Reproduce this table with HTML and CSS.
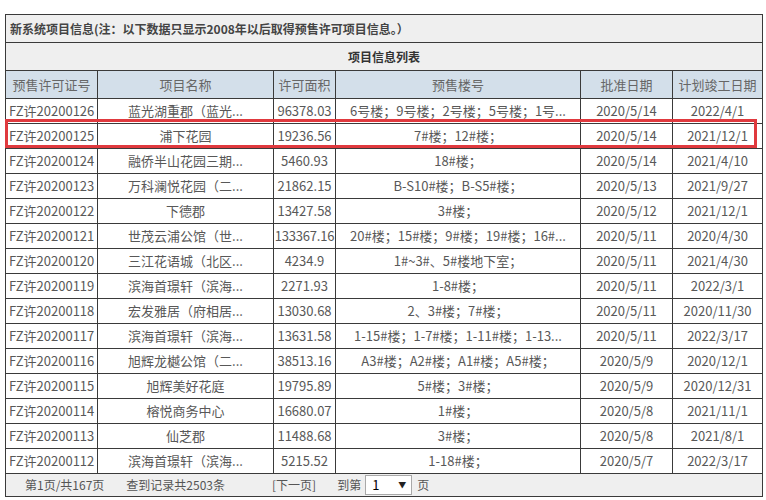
FILE: index.html
```html
<!DOCTYPE html>
<html lang="zh-CN">
<head>
<meta charset="utf-8">
<title>项目信息列表</title>
<link rel="stylesheet" href="styles.css">
</head>
<body>
<div class="page">
  <table class="grid">
    <colgroup>
      <col class="c1"><col class="c2"><col class="c3"><col class="c4"><col class="c5"><col class="c6">
    </colgroup>
    <tr class="title"><td colspan="6">新系统项目信息(注：以下数据只显示2008年以后取得预售许可项目信息。）</td></tr>
    <tr class="caption"><td colspan="6">项目信息列表</td></tr>
    <tr class="head"><td>预售许可证号</td><td>项目名称</td><td>许可面积</td><td>预售楼号</td><td>批准日期</td><td>计划竣工日期</td></tr>
    <tr><td class="l">FZ许20200126</td><td>蓝光湖重郡（蓝光...</td><td>96378.03</td><td>6号楼；9号楼；2号楼；5号楼；1号...</td><td>2020/5/14</td><td>2022/4/1</td></tr>
    <tr class="mark"><td class="l">FZ许20200125</td><td>浦下花园</td><td>19236.56</td><td>7#楼；12#楼；</td><td>2020/5/14</td><td>2021/12/1</td></tr>
    <tr><td class="l">FZ许20200124</td><td>融侨半山花园三期...</td><td>5460.93</td><td>18#楼；</td><td>2020/5/14</td><td>2021/4/10</td></tr>
    <tr><td class="l">FZ许20200123</td><td>万科澜悦花园（二...</td><td>21862.15</td><td>B-S10#楼；B-S5#楼；</td><td>2020/5/13</td><td>2021/9/27</td></tr>
    <tr><td class="l">FZ许20200122</td><td>下德郡</td><td>13427.58</td><td>3#楼；</td><td>2020/5/12</td><td>2021/12/1</td></tr>
    <tr><td class="l">FZ许20200121</td><td>世茂云浦公馆（世...</td><td class="wide">133367.16</td><td>20#楼；15#楼；9#楼；19#楼；16#...</td><td>2020/5/11</td><td>2020/4/30</td></tr>
    <tr><td class="l">FZ许20200120</td><td>三江花语城（北区...</td><td>4234.9</td><td>1#~3#、5#楼地下室；</td><td>2020/5/11</td><td>2021/4/30</td></tr>
    <tr><td class="l">FZ许20200119</td><td>滨海首璟轩（滨海...</td><td>2271.93</td><td>1-8#楼；</td><td>2020/5/11</td><td>2022/3/1</td></tr>
    <tr><td class="l">FZ许20200118</td><td>宏发雅居（府相居...</td><td>13030.68</td><td>2、3#楼；7#楼；</td><td>2020/5/11</td><td>2020/11/30</td></tr>
    <tr><td class="l">FZ许20200117</td><td>滨海首璟轩（滨海...</td><td>13631.58</td><td>1-15#楼；1-7#楼；1-11#楼；1-13...</td><td>2020/5/11</td><td>2022/3/17</td></tr>
    <tr><td class="l">FZ许20200116</td><td>旭辉龙樾公馆（二...</td><td>38513.16</td><td>A3#楼；A2#楼；A1#楼；A5#楼；</td><td>2020/5/9</td><td>2020/12/1</td></tr>
    <tr><td class="l">FZ许20200115</td><td>旭辉美好花庭</td><td>19795.89</td><td>5#楼；3#楼；</td><td>2020/5/9</td><td>2020/12/31</td></tr>
    <tr><td class="l">FZ许20200114</td><td>榕悦商务中心</td><td>16680.07</td><td>1#楼；</td><td>2020/5/8</td><td>2021/11/1</td></tr>
    <tr><td class="l">FZ许20200113</td><td>仙芝郡</td><td>11488.68</td><td>3#楼；</td><td>2020/5/8</td><td>2021/8/1</td></tr>
    <tr><td class="l">FZ许20200112</td><td>滨海首璟轩（滨海...</td><td>5215.52</td><td>1-18#楼；</td><td>2020/5/7</td><td>2022/3/17</td></tr>
    <tr class="foot"><td colspan="6">
      <div class="pager">
        <span class="p-page">第1页/共167页</span>
        <span class="p-count">查到记录共2503条</span>
        <span class="p-next">[下一页]</span>
        <span class="p-goto">到第</span>
        <span class="sel"><span class="sel-val">1</span><span class="sel-arrow">▼</span></span>
        <span class="p-unit">页</span>
      </div>
    </td></tr>
  </table>
  <div class="highlight"></div>
</div>
</body>
</html>
```

FILE: styles.css
```css
html, body {
  margin: 0;
  padding: 0;
  background: #ffffff;
}
.page {
  position: relative;
  padding: 14px 5px 0 5px;
  font-family: "Noto Sans CJK SC", "Microsoft YaHei", sans-serif;
  font-size: 13px;
  color: #585858;
}
.grid {
  border-collapse: collapse;
  table-layout: fixed;
  width: 757px;
}
.c1 { width: 92px; }
.c2 { width: 176px; }
.c3 { width: 62px; }
.c4 { width: 245px; }
.c5 { width: 92px; }
.c6 { width: 90px; }
.grid td {
  border: 1px solid #3a3a3a;
  height: 24px;
  padding: 0 2px;
  text-align: center;
  white-space: nowrap;
  overflow: hidden;
  line-height: 16px;
}
.grid td.l {
  text-align: left;
  padding-left: 3px;
}
.grid td.wide {
  padding: 0;
  overflow: visible;
  letter-spacing: -0.2px;
}
.title td {
  height: 27px;
  background: #efefef;
  text-align: left;
  font-weight: bold;
  font-size: 12px;
  color: #444444;
  padding-left: 4px;
}
.caption td {
  height: 27px;
  background: #efefef;
  font-weight: bold;
  font-size: 12px;
  color: #333333;
}
.head td {
  height: 27px;
  background: #d3dfea;
  color: #666666;
}
.foot td {
  height: 22px;
  background: #efefef;
  padding: 0;
  text-align: left;
}
.pager {
  display: flex;
  align-items: center;
  font-size: 12px;
  color: #555555;
}
.p-page { margin-left: 19px; }
.p-count { margin-left: 22px; }
.p-next { margin-left: 47px; }
.p-goto { margin-left: 21px; }
.sel {
  display: flex;
  align-items: center;
  justify-content: space-between;
  width: 47px;
  height: 20px;
  margin-left: 4px;
  background: #ffffff;
  border: 1px solid #a9a9a9;
  padding: 0 5px 0 6px;
  box-sizing: border-box;
  color: #000000;
  font-size: 13px;
}
.sel-arrow {
  font-size: 8px;
  color: #222222;
}
.p-unit { margin-left: 5px; }
.highlight {
  position: absolute;
  left: 5px;
  top: 119px;
  width: 752px;
  height: 29px;
  border: 3px solid #e0393e;
  box-sizing: border-box;
}
```
